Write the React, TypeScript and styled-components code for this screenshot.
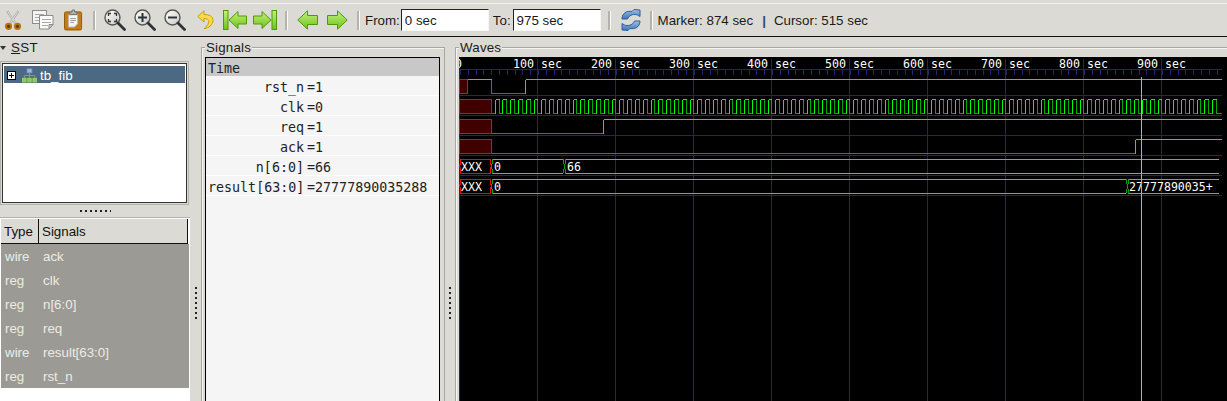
import React from 'react'
import styled, { createGlobalStyle } from 'styled-components'

const GlobalStyle = createGlobalStyle`
  html, body {
    margin: 0;
    padding: 0;
    background: #dcdad5;
    overflow: hidden;
  }
  * { box-sizing: border-box; }
`

// waves are drawn in page coordinates, the group below shifts them into the svg
const ORIGIN_X = 459
const ORIGIN_Y = 57
const SEC0 = 460
const PX_PER_100 = 78
const END_X = 1221
const ROW_TOPS = [79, 99, 119, 139, 159, 179]
const HIGH = '#00ff00'
const LOW = '#00a800'
const GRID = '#24246e'

const signals = [
  { name: 'rst_n', value: '1' },
  { name: 'clk', value: '0' },
  { name: 'req', value: '1' },
  { name: 'ack', value: '1' },
  { name: 'n[6:0]', value: '66' },
  { name: 'result[63:0]', value: '27777890035288' },
]

const listing = [
  ['wire', 'ack'],
  ['reg', 'clk'],
  ['reg', 'n[6:0]'],
  ['reg', 'req'],
  ['wire', 'result[63:0]'],
  ['reg', 'rst_n'],
]

const Gradients = () => (
  <svg width="0" height="0" style={{ position: 'absolute' }}>
    <defs>
      <linearGradient id="arrowFill" x1="0" y1="0" x2="0" y2="1">
        <stop offset="0" stopColor="#c4f07e" />
        <stop offset="1" stopColor="#6dc31c" />
      </linearGradient>
      <linearGradient id="lensFill" x1="0" y1="0" x2="1" y2="1">
        <stop offset="0" stopColor="#ffffff" />
        <stop offset="1" stopColor="#c8c8c4" />
      </linearGradient>
      <linearGradient id="blueFill" x1="0" y1="0" x2="0" y2="1">
        <stop offset="0" stopColor="#9cc0e6" />
        <stop offset="1" stopColor="#3e73b4" />
      </linearGradient>
    </defs>
  </svg>
)

const Scissors = () => (
  <svg width="18" height="21" viewBox="0 0 20 22">
    <path d="M3.5 0.5 L12.5 14 M16 0.5 L7 14" stroke="#a9a9a4" strokeWidth="2.4" fill="none" />
    <path d="M4 1 L12.5 14 M15.5 1 L7 14" stroke="#ecebe8" strokeWidth="0.9" fill="none" />
    <circle cx="5" cy="17.5" r="2.9" fill="#5e3c08" stroke="#b5740f" strokeWidth="2.2" />
    <circle cx="15" cy="17.5" r="2.9" fill="#5e3c08" stroke="#b5740f" strokeWidth="2.2" />
  </svg>
)

const Copy = () => (
  <svg width="22" height="20" viewBox="0 0 22 20">
    <rect x="0.5" y="0.5" width="14" height="13" fill="#f4f4f2" stroke="#8c8c88" />
    <path d="M3 4.5h9M3 7.5h9M3 10.5h9" stroke="#a8a8a4" />
    <path d="M7.5 5.5h13.5v9l-4 4.5h-9.5z" fill="#fbfbfa" stroke="#8c8c88" />
    <path d="M10 9.5h9M10 12.5h9M10 15.5h6" stroke="#a8a8a4" />
    <path d="M17 19v-4.500h4z" fill="#c9c9c5" stroke="#8c8c88" />
  </svg>
)

const Paste = () => (
  <svg width="19" height="22" viewBox="0 0 20 22">
    <rect x="0.5" y="2.500" width="18" height="19" rx="1.500" fill="#c17d11" stroke="#8f5902" />
    <path d="M4.500 5.500h10v9.500l-3.500 3.500h-6.500z" fill="#f6f6f4" stroke="#a8a8a4" />
    <path d="M6.500 9.500h6M6.500 11.500h6M6.500 13.500h4" stroke="#9a9a96" />
    <path d="M6 4.500v-2h2.500v-2h2.500v2h2.500v2.500h-7.500z" fill="#b8b8b4" stroke="#6e6e6a" />
  </svg>
)

const Magnifier = ({ children }: { children?: React.ReactNode }) => (
  <svg width="22" height="23" viewBox="0 0 22 23">
    <circle cx="8.500" cy="8.500" r="7.500" fill="url(#lensFill)" stroke="#555753" strokeWidth="1.400" />
    <path d="M14 14 L20.500 20.500" stroke="#2e3436" strokeWidth="2.800" strokeLinecap="round" />
    {children}
  </svg>
)

const ZoomFit = () => (
  <Magnifier>
    <path d="M4.500 7V4.500H7M10 4.500h2.500V7M12.500 10v2.500H10M7 12.500H4.500V10" stroke="#2e3436" strokeWidth="1.300" fill="none" />
  </Magnifier>
)

const ZoomIn = () => (
  <Magnifier>
    <path d="M4 8.500h9M8.500 4v9" stroke="#2e3436" strokeWidth="2" />
  </Magnifier>
)

const ZoomOut = () => (
  <Magnifier>
    <path d="M4 8.500h9" stroke="#2e3436" strokeWidth="2" />
  </Magnifier>
)

const Undo = () => (
  <svg width="17" height="20" viewBox="0 0 17 20">
    <path
      d="M7 0.800 L0.800 6.500 L7 12 V8.500 C11 8.500 12.500 10.500 11.500 13 C10.800 15 9 17 7 18.800 C12 18 16 14.500 16 10.500 C16 6.500 12.500 4.500 7 4.500 Z"
      fill="#fcd94f"
      stroke="#c9a000"
    />
  </svg>
)

const arrowStyle = { fill: 'url(#arrowFill)', stroke: '#4e9a06' }

const JumpStart = () => (
  <svg width="24" height="20" viewBox="0 0 24 20">
    <rect x="0.500" y="0.500" width="4.500" height="19" {...arrowStyle} />
    <path d="M6 10 L15 1.500 V6 H23.500 V14 H15 V18.500 Z" {...arrowStyle} />
  </svg>
)

const JumpEnd = () => (
  <svg width="24" height="20" viewBox="0 0 24 20">
    <path d="M18 10 L9 1.500 V6 H0.500 V14 H9 V18.500 Z" {...arrowStyle} />
    <rect x="19" y="0.500" width="4.500" height="19" {...arrowStyle} />
  </svg>
)

const ArrowLeft = () => (
  <svg width="21" height="20" viewBox="0 0 21 20">
    <path d="M0.800 10 L10.500 0.800 V5.500 H20.500 V14.500 H10.500 V19.200 Z" {...arrowStyle} />
  </svg>
)

const ArrowRight = () => (
  <svg width="21" height="20" viewBox="0 0 21 20">
    <path d="M20.200 10 L10.500 0.800 V5.500 H0.500 V14.500 H10.500 V19.200 Z" {...arrowStyle} />
  </svg>
)

const Refresh = () => (
  <svg width="20" height="22" viewBox="0 0 20 22">
    <path d="M1 10 C1 4 6 1.500 11 2.500 L13 0.500 L19 1 L19 7.500 L16.500 6 C13.500 5 9 5 6.500 10 Z" fill="url(#blueFill)" stroke="#2f5f9e" />
    <path d="M19 12 C19 18 14 20.500 9 19.500 L7 21.500 L1 21 L1 14.500 L3.500 16 C6.500 17 11 17 13.500 12 Z" fill="url(#blueFill)" stroke="#2f5f9e" />
  </svg>
)

const HierarchyIcon = () => (
  <svg width="15" height="15" viewBox="0 0 16 15">
    <rect x="5.500" y="0.500" width="5" height="4" fill="#9db8d8" stroke="#7f9cc0" />
    <path d="M8 5v3M2.500 10V7.500h11V10M8 8v2" stroke="#8f9c8c" fill="none" />
    <rect x="0" y="10" width="5" height="5" fill="#8ccb5e" />
    <rect x="5.500" y="10" width="5" height="5" fill="#8ccb5e" />
    <rect x="11" y="10" width="5" height="5" fill="#8ccb5e" />
  </svg>
)

const line = (x1: number, y1: number, x2: number, y2: number, color: string, key: string) => (
  <line key={key} x1={x1 + 0.5} y1={y1 + 0.5} x2={x2 + 0.5} y2={y2 + 0.5} stroke={color} />
)

const Level = ({ top, points }: { top: number; points: [number, 0 | 1][] }) => {
  // points: x where the level starts, last one just closes the trace
  const out: React.ReactNode[] = []
  points.forEach(([x, level], i) => {
    const next = points[i + 1]
    if (!next) return
    const y = level ? top : top + 14
    out.push(line(x, y, next[0], y, level ? HIGH : LOW, `h${i}`))
    if (next[1] !== level && i + 2 < points.length) {
      out.push(line(next[0], top, next[0], top + 14, next[1] ? HIGH : LOW, `v${i}`))
    }
  })
  return <g>{out}</g>
}

const RedBox = ({ top, right }: { top: number; right: number }) => (
  <rect x={459.5} y={top + 0.5} width={right - 459} height={14} fill="#400000" stroke="#ff0000" />
)

const XBox = ({ top }: { top: number }) => (
  <g>
    <path
      d={`M459.500 ${top + 6.500} L460.500 ${top + 4.500} V${top + 0.500} H490.500 V${top + 4.500} L491.500 ${top + 6.500} L490.500 ${top + 9.500} V${top + 14.500} H460.500 V${top + 9.500} Z`}
      fill="none"
      stroke="#ff0000"
    />
    <WaveText x={461} y={top + 12}>XXX</WaveText>
  </g>
)

// one value on a bus: mid is where the left crossing meets, to is where the rails stop
const Bus = ({ top, mid, to, closed }: { top: number; mid: number; to: number; closed?: boolean }) => {
  const t = top + 0.5
  const b = top + 14.5
  const c = top + 7.5
  return (
    <g>
      <path d={`M${to} ${t} H${mid + 2} M${to} ${b} H${mid + 2}`} fill="none" stroke={HIGH} />
      <path d={`M${mid + 2} ${t} L${mid + 0.5} ${c} L${mid + 2} ${b}`} fill="none" stroke={LOW} />
      {closed && <path d={`M${to} ${t} L${to + 1.5} ${c} L${to} ${b}`} fill="none" stroke={LOW} />}
    </g>
  )
}

const Waves = () => {
  const majors = Array.from({ length: 10 }, (_, i) => SEC0 - 1 + i * PX_PER_100)
  const ticks = Array.from({ length: 98 }, (_, i) => Math.round(SEC0 + i * (PX_PER_100 / 10)))

  const clk: [number, 0 | 1][] = [[491, 0]]
  for (let x = 494.6; x + 3.9 < END_X; x += 7.8) {
    clk.push([Math.round(x), 1])
    clk.push([Math.round(x + 3.9), 0])
  }
  clk.push([END_X, 0])

  return (
    <WaveCanvas width={768} height={360}>
      <g transform={`translate(${-ORIGIN_X} ${-ORIGIN_Y})`} shapeRendering="crispEdges">
        {majors.map((x) => line(x, 58, x, 420, GRID, `m${x}`))}
        {line(459, 69, END_X, 69, GRID, 'ruler')}
        {ticks.map((x) => line(x, 69, x, 74, GRID, `t${x}`))}
        {[95, 115, 135, 155, 175, 195].map((y) => line(459, y, END_X, y, GRID, `r${y}`))}

        {/* rst_n */}
        <RedBox top={ROW_TOPS[0]} right={467} />
        <Level top={ROW_TOPS[0]} points={[[467, 1], [491, 0], [525, 1], [END_X, 1]]} />

        {/* clk */}
        <RedBox top={ROW_TOPS[1]} right={491} />
        <Level top={ROW_TOPS[1]} points={clk} />

        {/* req */}
        <RedBox top={ROW_TOPS[2]} right={491} />
        <Level top={ROW_TOPS[2]} points={[[491, 0], [603, 1], [END_X, 1]]} />

        {/* ack */}
        <RedBox top={ROW_TOPS[3]} right={491} />
        <Level top={ROW_TOPS[3]} points={[[491, 0], [1135, 1], [END_X, 1]]} />

        {/* n */}
        <XBox top={ROW_TOPS[4]} />
        <Bus top={ROW_TOPS[4]} mid={491} to={563} closed />
        <Bus top={ROW_TOPS[4]} mid={564} to={1219} />
        <WaveText x={494} y={ROW_TOPS[4] + 12}>0</WaveText>
        <WaveText x={567} y={ROW_TOPS[4] + 12}>66</WaveText>

        {/* result */}
        <XBox top={ROW_TOPS[5]} />
        <Bus top={ROW_TOPS[5]} mid={491} to={1126} closed />
        <Bus top={ROW_TOPS[5]} mid={1127} to={1219} />
        <WaveText x={494} y={ROW_TOPS[5] + 12}>0</WaveText>
        <WaveText x={1129} y={ROW_TOPS[5] + 12}>27777890035+</WaveText>

        {line(1141, 76, 1141, 420, '#ff9090', 'marker')}

        {majors.map((x, i) => (
          <g key={x}>
            <WaveText x={i === 0 ? x + 3 : x - 3} y={68} textAnchor="end">{i * 100}</WaveText>
            {i > 0 && <WaveText x={x + 4} y={68}>sec</WaveText>}
          </g>
        ))}
      </g>
    </WaveCanvas>
  )
}

const App = () => (
  <Window>
    <GlobalStyle />
    <Gradients />
    <Toolbar>
      <ToolGroup>
        <ToolButton><Scissors /></ToolButton>
        <ToolButton><Copy /></ToolButton>
        <ToolButton><Paste /></ToolButton>
      </ToolGroup>
      <Separator />
      <ToolGroup>
        <ToolButton><ZoomFit /></ToolButton>
        <ToolButton><ZoomIn /></ToolButton>
        <ToolButton><ZoomOut /></ToolButton>
        <ToolButton><Undo /></ToolButton>
        <ToolButton><JumpStart /></ToolButton>
        <ToolButton><JumpEnd /></ToolButton>
      </ToolGroup>
      <Separator />
      <ToolGroup>
        <ToolButton><ArrowLeft /></ToolButton>
        <ToolButton><ArrowRight /></ToolButton>
      </ToolGroup>
      <Separator />
      <FieldLabel $after={1}>From:</FieldLabel>
      <TimeInput readOnly value="0 sec" />
      <FieldLabel $after={2}>To:</FieldLabel>
      <TimeInput readOnly value="975 sec" />
      <Separator />
      <ToolButton><Refresh /></ToolButton>
      <Separator />
      <Status>Marker: 874 sec</Status>
      <StatusBar>|</StatusBar>
      <Status>Cursor: 515 sec</Status>
    </Toolbar>

    <Panes>
      <LeftPane>
        <Expander>
          <Triangle />
          <span><u>S</u>ST</span>
        </Expander>
        <TreeFrame>
          <TreeRow>
            <PlusBox />
            <HierarchyIcon />
            <span>tb_fib</span>
          </TreeRow>
        </TreeFrame>
        <HandleH />
        <ListFrame>
          <ListHead>
            <TypeCell>Type</TypeCell>
            <NameCell>Signals</NameCell>
          </ListHead>
          {listing.map(([type, name]) => (
            <ListRow key={name}>
              <TypeValue>{type}</TypeValue>
              <span>{name}</span>
            </ListRow>
          ))}
        </ListFrame>
      </LeftPane>

      <HandleV $width={11} />

      <SignalFrame>
        <FrameTitle>Signals</FrameTitle>
        <SignalList>
          <TimeRow>Time</TimeRow>
          {signals.map((s) => (
            <SignalRow key={s.name}>
              <SignalName>{s.name}</SignalName>
              <span>={s.value}</span>
            </SignalRow>
          ))}
        </SignalList>
      </SignalFrame>

      <HandleV $width={10} />

      <WaveFrame>
        <FrameTitle>Waves</FrameTitle>
        <Waves />
      </WaveFrame>
    </Panes>
  </Window>
)

const Window = styled.div`
  width: 1227px;
  height: 401px;
  overflow: hidden;
  background: #dcdad5;
  font-family: 'Liberation Sans', Arial, sans-serif;
  font-size: 13.33px;
  color: #1a1a1a;
`

const Toolbar = styled.div`
  height: 34px;
  margin-top: 3px;
  border-top: 1px solid #f4f3f0;
  border-bottom: 1px solid #111;
  display: flex;
  align-items: center;
  margin-left: -2px;
`

const ToolGroup = styled.div`
  display: flex;
`

const ToolButton = styled.div`
  width: 30px;
  height: 26px;
  display: flex;
  align-items: center;
  justify-content: center;
`

const Separator = styled.div`
  width: 12px;
  height: 19px;
  display: flex;
  justify-content: center;

  &::before {
    content: '';
    width: 2px;
    height: 100%;
    background: #b4b2ac;
    border-right: 1px solid #fbfbfa;
  }
`

const FieldLabel = styled.span<{ $after: number }>`
  margin: 0 ${(p) => p.$after}px 0 1px;
`

const TimeInput = styled.input`
  width: 88px;
  height: 22px;
  padding: 0 0 0 3px;
  border: 1px solid;
  border-color: #222 #f6f6f4 #f6f6f4 #222;
  background: #fff;
  font: inherit;
  color: #1a1a1a;
  margin-right: 3px;
  outline: none;
`

const Status = styled.span`
  margin-right: 9px;
`

const StatusBar = styled.span`
  color: #2a4a7a;
  font-weight: bold;
  margin-right: 8px;
`

const Panes = styled.div`
  display: flex;
  height: 384px;
  padding-top: 3px;
  overflow: hidden;
`

const LeftPane = styled.div`
  width: 190px;
  flex: none;
  display: flex;
  flex-direction: column;
`

const Expander = styled.div`
  height: 21px;
  display: flex;
  align-items: flex-start;
  gap: 5px;
  line-height: 15px;
  letter-spacing: 0.3px;
`

const Triangle = styled.span`
  width: 0;
  height: 0;
  margin: 6px 0 0 0;
  border-left: 3.5px solid transparent;
  border-right: 3.500px solid transparent;
  border-top: 4px solid #333;
`

const TreeFrame = styled.div`
  height: 144px;
  margin-right: 1px;
  padding: 4px 2px 2px 2px;
  border: 1px solid #b4b2ac;
  background: #fff;
  box-shadow: inset 0 0 0 1px #dcdad5, inset 0 0 0 2px #333;
`

const TreeRow = styled.div`
  height: 17px;
  margin: 0 1px;
  padding: 1px 0 0 3px;
  display: flex;
  align-items: center;
  background: #4b6983;
  color: #fff;
  gap: 3px;
`

const PlusBox = styled.span`
  width: 9px;
  height: 9px;
  margin-right: 3px;
  border: 1px solid #000;
  background: linear-gradient(#000, #000) center / 5px 1px no-repeat,
    linear-gradient(#000, #000) center / 1px 5px no-repeat, #fff;
`

const HandleH = styled.div`
  height: 12px;
  display: flex;
  align-items: center;
  justify-content: center;

  &::before {
    content: '';
    width: 31px;
    height: 2px;
    background: repeating-linear-gradient(90deg, #222 0 2px, transparent 2px 5px);
  }
`

const ListFrame = styled.div`
  flex: 1;
  padding: 1px 1px 0;
  border-top: 1px solid #b4b2ac;
  background: #fff;
`

const ListHead = styled.div`
  height: 25px;
  width: 187px;
  display: flex;
  background: #dcdad5;
  border-bottom: 1px solid #111;
  border-right: 1px solid #111;
  color: #111;
`

const TypeCell = styled.div`
  width: 38px;
  padding: 5px 0 0 3px;
  border-right: 1px solid #111;
`

const NameCell = styled.div`
  padding: 5px 0 0 3px;
`

const ListRow = styled.div`
  height: 24px;
  display: flex;
  align-items: center;
  background: #9c9a94;
  color: #ecebe6;
  padding-left: 4px;
`

const TypeValue = styled.span`
  width: 38px;
`

const HandleV = styled.div<{ $width: number }>`
  width: ${(p) => p.$width}px;
  flex: none;
  display: flex;
  align-items: center;
  justify-content: center;
  padding-top: 144px;

  &::before {
    content: '';
    width: 2px;
    height: 32px;
    background: repeating-linear-gradient(180deg, #222 0 2px, transparent 2px 5px);
  }
`

const PanelFrame = styled.fieldset`
  margin: 0;
  padding: 2px 4px 0 3px;
  height: 420px;
  border: 1px solid #a8a69f;
  box-shadow: inset 1px 1px 0 #f6f5f2;
  flex: none;
  min-width: 0;
`

const SignalFrame = styled(PanelFrame)`
  width: 244px;
`

const WaveFrame = styled(PanelFrame)`
  width: 790px;
`

const FrameTitle = styled.legend`
  padding: 0 1px;
  margin-left: 0;
  height: 15px;
  line-height: 15px;
  background: #dcdad5;
  letter-spacing: 0.2px;
`

const SignalList = styled.div`
  height: 400px;
  border: 1px solid #000;
  background: #f5f5f5;
  font-family: 'DejaVu Sans Mono', 'Liberation Mono', monospace;
  font-size: 13.33px;
  color: #222;
`

const TimeRow = styled.div`
  height: 18px;
  padding: 2px 0 0 2px;
  line-height: 18px;
  background: #c8c8c8;
  overflow: hidden;
`

const SignalRow = styled.div`
  height: 20px;
  display: flex;
  align-items: center;
  padding: 4px 0 0 2px;
  border-bottom: 1px solid #fff;
  white-space: nowrap;
`

const SignalName = styled.span`
  width: 96px;
  margin-right: 3px;
  text-align: right;
  flex: none;
`

const WaveCanvas = styled.svg`
  display: block;
  background: #000;
`

const WaveText = styled.text`
  font-family: 'DejaVu Sans Mono', 'Liberation Mono', monospace;
  font-size: 11.6px;
  fill: #fff;
`

export default App
